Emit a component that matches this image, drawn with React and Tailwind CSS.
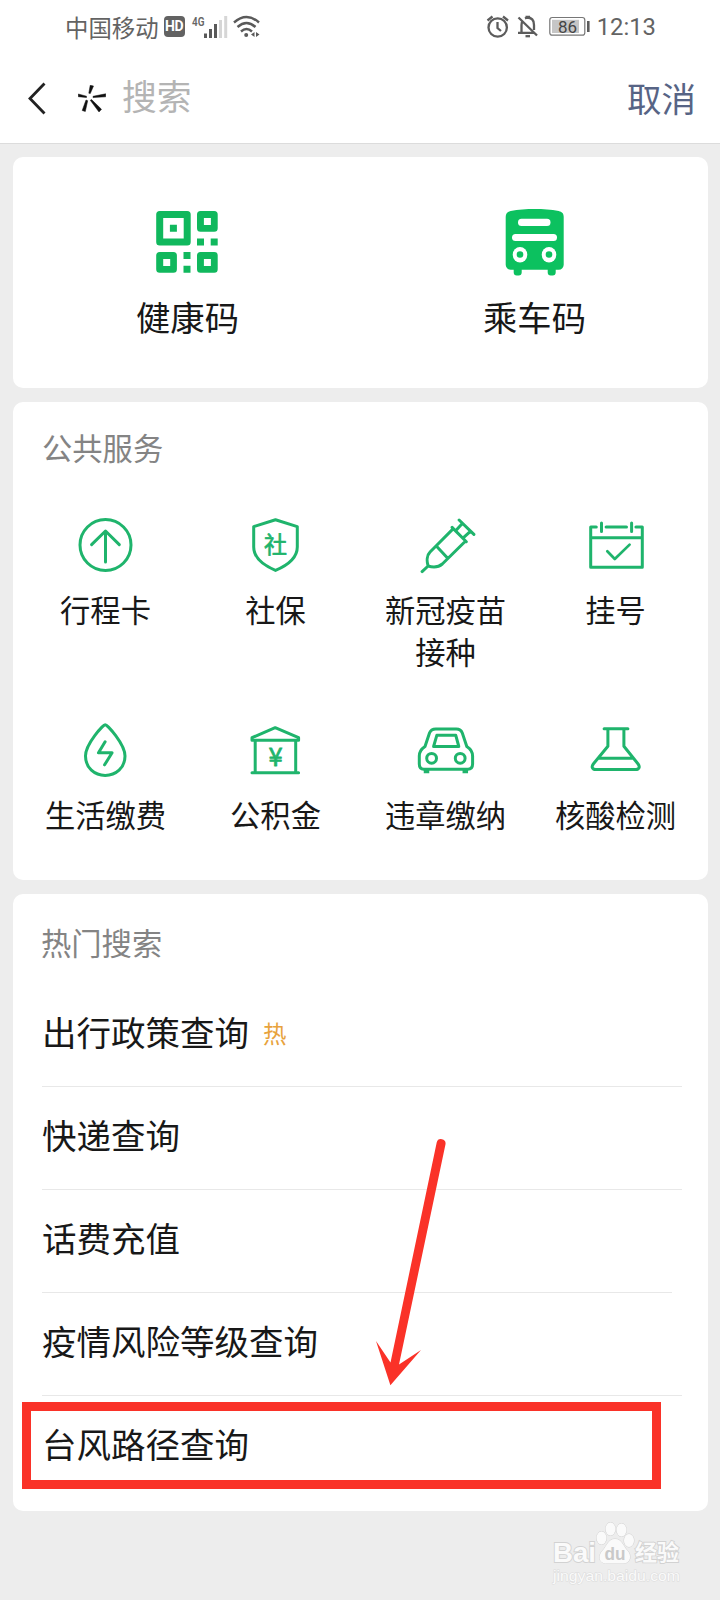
const services = [
    { name: ["行程卡"], icon: <TripIcon /> },
    { name: ["社保"], icon: <ShieldIcon /> },
    { name: ["新冠疫苗", "接种"], icon: <VaccineIcon /> },
    { name: ["挂号"], icon: <CalendarIcon /> },
    { name: ["生活缴费"], icon: <DropIcon /> },
    { name: ["公积金"], icon: <FundIcon /> },
    { name: ["违章缴纳"], icon: <CarIcon /> },
    { name: ["核酸检测"], icon: <FlaskIcon /> },
]

const searches = [
    { name: "出行政策查询", hot: true },
    { name: "快递查询" },
    { name: "话费充值", short: true },
    { name: "疫情风险等级查询" },
    { name: "台风路径查询" },
]

function LineIcon({ children }) {
    return (
        <svg width="60" height="60" viewBox="0.7 0 60 60" fill="none" stroke="#1fb46c" strokeWidth="3" strokeLinecap="round" strokeLinejoin="round">
            {children}
        </svg>
    )
}

function TripIcon() {
    return (
        <LineIcon>
            <circle cx="30.2" cy="30" r="25.5" />
            <path d="M30.2 47V16M16.3 29.6 30.2 16 44 29.6" />
        </LineIcon>
    )
}

function ShieldIcon() {
    return (
        <LineIcon>
            <path d="M30.2 4.8 52 11.6V32C52 43 43 50 30.2 55.4 17.4 50 8.4 43 8.4 32V11.6Z" />
            <text x="30.2" y="37.600" textAnchor="middle" fontSize="23" fontWeight="400" fill="#1fb46c" stroke="#1fb46c" strokeWidth="0.7">社</text>
        </LineIcon>
    )
}

function VaccineIcon() {
    return (
        <LineIcon>
            <path d="M6.8 56.6 12.8 51M12.8 51C11.3 46 11.6 40 14.5 37.3L38 13.6 50.3 26 27 49C23.5 52 17.5 52.4 12.8 51ZM21 31 32.2 43M36.8 12.4 38 13.6M50.3 26 51 26.7M43.8 5 58.6 19.4M47 8.6 40.4 15.8M54.8 16.6 47.6 23.2" />
        </LineIcon>
    )
}

function CalendarIcon() {
    return (
        <LineIcon>
            <path d="M11 12H5.4V52.3H57V12H50.6M20.8 12H41.2M5.4 22.7H57M16.2 8V16.5M46.3 8V16.5" />
            <path d="M22 36.2 29.5 44 44.3 29.6" strokeWidth="2.7" />
        </LineIcon>
    )
}

function DropIcon() {
    return (
        <LineIcon>
            <path d="M29.9 4.8C32 4.8 49.7 24 49.7 36 49.7 48 40.5 55.4 29.9 55.4S10.2 48 10.2 36C10.2 24 27.8 4.8 29.9 4.8Z" />
            <path d="M29.8 21.8 23.2 32.8H36.8L29.3 44.8" />
        </LineIcon>
    )
}

function FundIcon() {
    return (
        <LineIcon>
            <path d="M6.7 20.3V17.7L29.9 7.7 53.3 17.7V20.3ZM9.9 20.3V52.800M50.4 20.3V52.800M6.7 52.800H53.3" />
            <text x="30.2" y="45.800" textAnchor="middle" fontSize="25.500" fontWeight="400" fill="#1fb46c" stroke="#1fb46c" strokeWidth="0.800">¥</text>
        </LineIcon>
    )
}

function CarIcon() {
    return (
        <LineIcon>
            <path d="M20.5 8.9H41C44.5 8.9 46 10.2 47 13L51.5 26.5C56 29.5 57.3 32 57.3 36V44C57.3 47.5 55.5 49.2 52.5 49.2H8.5C5.5 49.2 4 47.5 4 44V36C4 32 5.2 29.5 9.7 26.5L14.2 13C15.2 10.2 17 8.9 20.5 8.9Z" />
            <path d="M21.5 15.3H40.5L43.5 26.5H18.3Z" />
            <circle cx="16.3" cy="38.3" r="4.9" />
            <circle cx="44.9" cy="38.3" r="4.9" />
            <path d="M11.2 50V53.300M50 50V53.300" strokeWidth="5.500" strokeLinecap="butt" />
        </LineIcon>
    )
}

function FlaskIcon() {
    return (
        <LineIcon>
            <path d="M18.800 8.7H42.600M22.600 8.7V26.2L8 44C5.8 47 7 49.600 10.5 49.600H50.3C53.8 49.600 55 47 52.8 44L38.600 26.2V8.7M14.5 38.3H46.5" />
        </LineIcon>
    )
}

function QrIcon() {
    return (
        <svg width="62" height="62" viewBox="0.800 0 62 62" overflow="visible" fill="#10b85d" fillRule="evenodd">
            <path d="M3.5 0H31a3.5 3.5 0 0 1 3.5 3.5V31a3.5 3.5 0 0 1-3.5 3.5H3.5A3.5 3.5 0 0 1 0 31V3.5A3.5 3.5 0 0 1 3.5 0ZM7 7V27.5H27.5V7Z" />
            <path d="M44.3 0H58a3.5 3.5 0 0 1 3.5 3.5V17.2a3.5 3.5 0 0 1-3.5 3.5H44.3a3.5 3.5 0 0 1-3.5-3.5V3.5A3.5 3.5 0 0 1 44.3 0ZM47.7 7V14H54.7V7Z" />
            <path d="M3.5 41H17.2a3.5 3.5 0 0 1 3.5 3.5V58.2a3.5 3.5 0 0 1-3.5 3.5H3.5A3.5 3.5 0 0 1 0 58.2V44.5A3.5 3.5 0 0 1 3.5 41ZM7 48V55H14V48Z" />
            <path d="M44.3 41H58a3.5 3.5 0 0 1 3.5 3.5V58.2a3.5 3.5 0 0 1-3.5 3.5H44.3a3.5 3.5 0 0 1-3.5-3.5V44.5A3.5 3.5 0 0 1 44.3 41ZM47.7 48V55H54.7V48Z" />
            <path d="M13.7 13.7h7v7h-7ZM40.8 27.5h7v7h-7ZM54.5 27.5h7v7h-7ZM27.3 41h7v7h-7ZM27.3 54.7h7v7h-7Z" />
        </svg>
    )
}

function BusIcon() {
    return (
        <svg width="59" height="67" viewBox="-0.700 0 59 67" overflow="visible" fill="#0cc15f">
            <path d="M0 8C0 4.5 1.5 3 5 2 20 -.6 38 -.6 53 2 56.500 3 58 4.500 58 8V55.500A5 5 0 0 1 53 60.700H50V63.500A3 3 0 0 1 47 66.400H45A3 3 0 0 1 42 63.500V60.700H16V63.500A3 3 0 0 1 13 66.400H11A3 3 0 0 1 8 63.500V60.700H5A5 5 0 0 1 0 55.500Z" />
            <rect x="12.300" y="9.800" width="32.500" height="7.200" rx="3.500" fill="#fff" />
            <rect x="6.300" y="25" width="45" height="7" rx="3.500" fill="#fff" />
            <ellipse cx="14.300" cy="45.700" rx="7.300" ry="7.700" fill="#fff" />
            <ellipse cx="43.300" cy="45.700" rx="7.300" ry="7.700" fill="#fff" />
            <circle cx="14.300" cy="45.500" r="3.300" />
            <circle cx="43.300" cy="45.500" r="3.300" />
        </svg>
    )
}

function StatusBar() {
    return (
        <div className="h-[54px] flex items-center justify-between pl-[65px] pr-[64px] text-[#636363]">
            <div className="flex items-center">
                <span className="text-[23.400px] leading-[30px] -mt-px">中国移动</span>
                <span className="ml-[5px] -mt-px h-[21px] w-[21px] rounded-[4px] bg-[#626262] text-white font-['Roboto'] font-bold text-[14px] leading-[21px] text-center tracking-[-0.500px]">HD</span>
                <svg className="ml-[6px]" width="70" height="26" viewBox="192 13 70 26">
                    <text x="193" y="24.500" fontFamily="Roboto" fontSize="13" fontWeight="600" fill="#666" textLength="12.500" lengthAdjust="spacingAndGlyphs">4G</text>
                    <path d="M206.500 32.500V37M211.500 28V37M216.500 23V37" stroke="#5a5a5a" strokeWidth="3" />
                    <path d="M221.500 19V37M226.700 15V37" stroke="#d6d6d6" strokeWidth="3" />
                    <g fill="none" stroke="#5a5a5a" strokeWidth="2.400">
                        <path d="M235 21.500Q247.500 10.500 260 21.500M238.500 26Q247.500 18 256.500 26M242 30.500Q247.500 25.500 253 30.500" />
                    </g>
                    <circle cx="247.200" cy="34" r="2" fill="#5a5a5a" />
                    <path d="M255.500 31V36L252 33.500ZM257 31V36L260.500 33.500Z" fill="#5a5a5a" />
                </svg>
            </div>
            <div className="flex items-center">
                <svg width="104" height="26" viewBox="486 14 104 26" fill="none" stroke="#5c5c5c" strokeWidth="2.300">
                    <circle cx="497.700" cy="27.500" r="9.200" />
                    <path d="M497.500 22V28L501 31M487.500 20.500 492.500 16.500M508 20.500 503 16.500" />
                    <path d="M518.500 17.500 537 35.500M518 32.800H534M521.500 32V25C521.500 23 522 21.500 523 20.500M525 18.500 527 17.500C532 17.500 534 21 534 25V30M525.500 17H530" />
                    <path d="M525.500 36.200H530" />
                    <rect x="549.800" y="17.500" width="35" height="17.700" rx="2.500" strokeWidth="1.200" stroke="#777" />
                    <rect x="552" y="19.800" width="27" height="13.200" fill="#c6c6c6" stroke="none" />
                    <path d="M588.300 21V32" strokeWidth="2.600" />
                    <text x="567.500" y="32.600" textAnchor="middle" fontFamily="Roboto" fontSize="17" fill="#444" stroke="none">86</text>
                </svg>
                <span className="ml-[7px] font-['Roboto'] text-[23.800px] leading-[30px]">12:13</span>
            </div>
        </div>
    )
}

function SearchBar() {
    return (
        <div className="h-[89px] flex items-center pl-7 pr-6">
            <svg width="18" height="34" viewBox="0 0 18 34" fill="none" stroke="#222" strokeWidth="2.800">
                <path d="M16.500 1.500 2 16.500 16.500 31.500" />
            </svg>
            <svg className="ml-8" width="28" height="28" viewBox="0 0 28 28" fill="#111" stroke="#111" strokeWidth="0.500">
                <path d="M12.200 0.300 15.500 1 12.300 8.500 10.800 8.200ZM0.300 9 8.500 11.200V12.500L0.300 11.700ZM15 11.300 27.700 8.800V11.800L15 12.600ZM8 15 9.700 15.700 7.300 26.500 4.200 25.500ZM12.300 15.300 13.500 14.500 23.500 24.300 21 27Z" />
            </svg>
            <span className="ml-4 -mt-[7px] text-[34.800px] leading-[50px] text-[#b4b4b4]">搜索</span>
            <span className="ml-auto -mt-[4px] text-[34.500px] leading-[50px] text-[#576485]">取消</span>
        </div>
    )
}

function Watermark() {
    return (
        <svg className="absolute left-[550px] top-[1518px]" width="136" height="68" viewBox="0 0 136 68" fill="#fafafa" stroke="#d2d2d2" strokeWidth="1.800" paintOrder="stroke">
            <ellipse cx="51.500" cy="20" rx="5" ry="6.500" strokeWidth="1" />
            <ellipse cx="60.500" cy="11" rx="5" ry="6.500" strokeWidth="1" />
            <ellipse cx="71.500" cy="12" rx="5" ry="6.500" strokeWidth="1" />
            <ellipse cx="79" cy="22.500" rx="5" ry="6.500" strokeWidth="1" />
            <path d="M65 21C72 21 73 28 77 32 82 37 81 45.500 73 45.500H57C48 45.500 48 37 53 32 57 28 58 21 65 21Z" strokeWidth="1" />
            <text x="3" y="43.500" fontFamily="Liberation Sans" fontSize="28" fontWeight="700" textLength="43" lengthAdjust="spacingAndGlyphs">Bai</text>
            <text x="54.500" y="41.500" fontFamily="Liberation Sans" fontSize="18" fontWeight="700" textLength="21" lengthAdjust="spacingAndGlyphs" fill="#c9c9c9" stroke="none">du</text>
            <text x="85" y="42" fontSize="22" fontWeight="700">经验</text>
            <text x="3" y="62.500" fontFamily="Liberation Sans" fontSize="14" textLength="127" lengthAdjust="spacingAndGlyphs" strokeWidth="1" stroke="#dcdcdc">jingyan.baidu.com</text>
        </svg>
    )
}

export default function App() {
    return (
        <div className="relative w-[720px] h-[1600px] overflow-hidden bg-[#ededed] font-['Noto_Sans_CJK_SC',sans-serif] text-[#181818]">
            <header className="h-[144px] bg-white border-b border-[#dcdcdc]">
                <StatusBar />
                <SearchBar />
            </header>

            <main className="flex flex-col gap-[14px] pt-[13px] pl-[13px] pr-3">
                <section className="h-[231px] rounded-[10px] bg-white flex pt-[52px]">
                    <div className="w-[349px] flex flex-col items-center">
                        <div className="h-[82px] pt-[2px]"><QrIcon /></div>
                        <span className="text-[34.300px] leading-[50px]">健康码</span>
                    </div>
                    <div className="w-[345px] flex flex-col items-center">
                        <div className="h-[82px]"><BusIcon /></div>
                        <span className="text-[34.300px] leading-[50px]">乘车码</span>
                    </div>
                </section>

                <section className="h-[478px] rounded-[10px] bg-white pt-[24px]">
                    <h2 className="pl-[29px] text-[30.300px] leading-[42px] text-[#848484]">公共服务</h2>
                    <div className="grid grid-cols-[repeat(4,170px)] pl-[7.500px] pt-[47px]">
                        {services.map((item) => (
                            <div key={item.name[0]} className="h-[205px] flex flex-col items-center">
                                {item.icon}
                                <div className="pt-[13px] text-[30.300px] leading-[42px] text-center">
                                    {item.name.map((line) => <div key={line}>{line}</div>)}
                                </div>
                            </div>
                        ))}
                    </div>
                </section>

                <section className="h-[617px] rounded-[10px] bg-white pt-[27px] pl-[29px]">
                    <h2 className="-ml-px text-[30.300px] leading-[42px] text-[#848484]">热门搜索</h2>
                    <ul className="pt-[21px]">
                        {searches.map((item, i) => (
                            <li key={item.name}>
                                <div className="h-[102px] flex items-center pb-[8px]">
                                    <span className="text-[34.500px] leading-[50px]">{item.name}</span>
                                    {item.hot && <span className="ml-[14px] mt-[3px] text-[23.500px] leading-[34px] text-[#e8a33d]">热</span>}
                                </div>
                                {i < 4 && <div className={item.short ? "h-px w-[630px] bg-[#e8e8e8]" : "h-px w-[640px] bg-[#e8e8e8]"}></div>}
                            </li>
                        ))}
                    </ul>
                </section>
            </main>

            <div className="absolute left-[22px] top-[1402px] w-[639px] h-[87px] border-[9px] border-[#fa3228]"></div>
            <svg className="absolute left-[370px] top-[1130px]" width="90" height="260" viewBox="370 1130 90 260" fill="#fa3228">
                <path d="M436.700 1142.500A4.500 4.500 0 0 1 445.500 1144.300L399 1364.500 421 1350 390.400 1385.200 376 1341 390.500 1362.500Z" />
            </svg>
            <Watermark />
        </div>
    )
}
